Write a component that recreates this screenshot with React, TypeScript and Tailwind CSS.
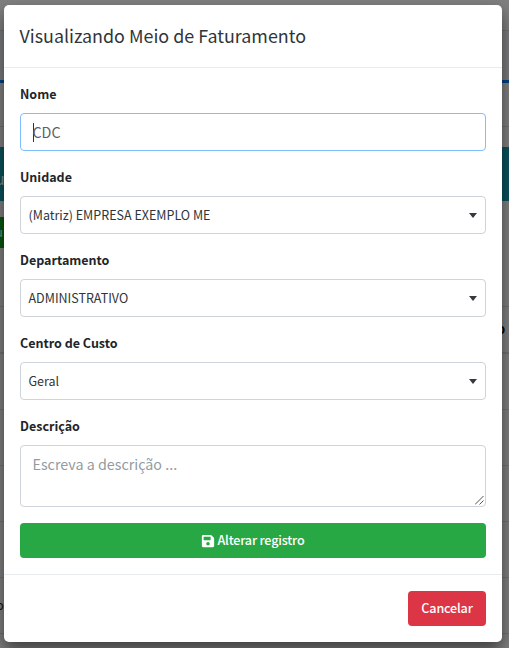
import type { ReactNode } from "react";

const bands = [
  "h-[30px] bg-[#7f7f7f]",
  "h-[50px] bg-[#7a7b7d] border-t border-[#6f7072]",
  "h-[3px] bg-[#003f80]",
  "h-[43px] bg-[#7f7f7f]",
  "h-[21px] bg-[#7f7f7f] border-t border-[#6f6f6f]",
  "h-[54px] bg-[#0b515c]",
  "h-[105px] bg-[#7f7f7f]",
  "h-[46px] bg-[#7f7f7f] border-t border-[#6f7071]",
  "h-[57px] bg-[#7f7f7f] border-t-2 border-[#6f7071]",
  "h-[56px] bg-[#7f7f7f] border-t border-[#6f7071]",
  "h-[56px] bg-[#7f7f7f] border-t border-[#6f7071]",
  "h-[56px] bg-[#7f7f7f] border-t border-[#6f7071]",
  "h-[56px] bg-[#7f7f7f] border-t border-[#6f7071]",
  "h-[15px] bg-[#7f7f7f] border-t border-[#6f7071]",
];

function Field({ label, children }: { label: string; children: ReactNode }) {
  return (
    <div className="mb-4">
      <div className="mb-[9px] h-5 text-[12.5px] leading-5 font-bold">{label}</div>
      {children}
    </div>
  );
}

function Select({ value }: { value: string }) {
  return (
    <div className="flex h-[38px] items-center justify-between rounded border border-[#ced4da] pr-2 pl-[7.5px] text-[12.53px] text-[#30353a]">
      <span>{value}</span>
      <svg width="8" height="5" viewBox="0 0 8 5" fill="#343a40">
        <path d="M0 0H8L4 5Z" />
      </svg>
    </div>
  );
}

export default function App() {
  return (
    <div className="relative h-[648px] w-[509px] overflow-hidden font-['Noto_Sans_CJK_SC','Noto_Sans',sans-serif] text-[#212529]">
      <div className="flex flex-col">
        {bands.map((band, i) => (
          <div key={i} className={`shrink-0 ${band}`} />
        ))}
      </div>
      <div className="absolute top-[217px] left-0 h-[31px] w-3 bg-[#07560f]" />
      <span className="absolute top-[166px] -left-[5px] text-[16px] leading-[24px] text-[#7f8f91]">u</span>
      <span className="absolute top-[222px] -left-[5px] text-[13px] leading-[20px] text-[#7f8f7f]">u</span>
      <span className="absolute top-[319px] left-[497px] text-[13px] leading-[20px] font-bold text-black">o</span>
      <span className="absolute top-[595px] -left-[4px] text-[13px] leading-[20px] text-[#111]">o</span>

      <div className="absolute top-[5px] left-1 flex h-[637px] w-[498px] flex-col rounded-[5px] bg-white shadow-[0_8px_16px_rgba(0,0,0,0.5)]">
        <header className="flex h-[63px] shrink-0 items-center border-b border-[#e9ecef] px-4 pb-0.5">
          <h4 className="-ml-[0.5px] text-[17.9px] leading-[30px] text-[#30353a]">Visualizando Meio de Faturamento</h4>
        </header>
        <main className="flex-1 px-4 pt-4">
          <Field label="Nome">
            <div className="flex h-[38px] items-center rounded border border-[#80bdff] px-3 text-[14.3px] text-[#5a6066]">
              <span className="h-[19px] w-px bg-[#333]" />
              <span className="-ml-[1.5px]">CDC</span>
            </div>
          </Field>
          <Field label="Unidade"><Select value="(Matriz) EMPRESA EXEMPLO ME" /></Field>
          <Field label="Departamento"><Select value="ADMINISTRATIVO" /></Field>
          <Field label="Centro de Custo"><Select value="Geral" /></Field>
          <Field label="Descrição">
            <div className="flex h-[62px] justify-between rounded border border-[#ced4da] pt-[6px] pl-[11.5px] text-[14.3px] leading-6 text-[#939ba2]">
              <span>Escreva a descrição ...</span>
              <svg className="mr-px mb-px self-end" width="9" height="9" viewBox="0 0 9 9" stroke="#555" strokeWidth="1">
                <path d="M0 8.5L8.5 0M4.5 8.5L8.5 4.5" />
              </svg>
            </div>
          </Field>
          <button className="flex h-[35px] w-full items-center justify-center gap-[2px] rounded bg-[#28a745] text-[12.6px] font-medium text-white">
            <svg width="14" height="14" viewBox="0 0 448 512" fill="currentColor">
              <path d="M433.9 129.9l-83.9-83.9A48 48 0 0 0 316.1 32H48C21.5 32 0 53.5 0 80v352c0 26.5 21.5 48 48 48h352c26.5 0 48-21.5 48-48V163.9a48 48 0 0 0-14.1-34zM224 416c-35.3 0-64-28.7-64-64s28.7-64 64-64 64 28.7 64 64-28.7 64-64 64zm96-304.5V212c0 6.6-5.4 12-12 12H76c-6.6 0-12-5.4-12-12V108c0-6.6 5.4-12 12-12h228.5c3.2 0 6.2 1.3 8.5 3.5l3.5 3.5a12 12 0 0 1 3.5 8.5z" />
            </svg>
            <span className="tracking-[-0.18px]">Alterar registro</span>
          </button>
        </main>
        <footer className="flex h-[68px] shrink-0 items-center justify-end border-t border-[#e9ecef] px-4">
          <button className="h-[35px] w-[78px] rounded bg-[#dc3545] text-[12.6px] font-medium tracking-[-0.18px] text-white">Cancelar</button>
        </footer>
      </div>
    </div>
  );
}
